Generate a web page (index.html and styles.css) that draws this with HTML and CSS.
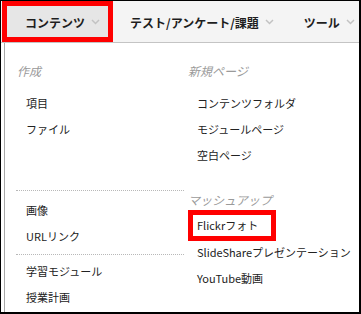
FILE: index.html
```html
<!DOCTYPE html>
<html lang="ja">
<head>
    <meta charset="UTF-8">
    <title>コンテンツメニュー</title>
    <link rel="stylesheet" href="styles.css">
</head>
<body>
    <div class="frame">
        <nav class="menubar">
            <div class="tab active">
                <span>コンテンツ</span>
                <svg class="chev" width="9" height="6" viewBox="0 0 9 6"><polyline points="1,1 4.5,4.5 8,1"/></svg>
            </div>
            <div class="tab">
                <span>テスト/アンケート/課題</span>
                <svg class="chev" width="9" height="6" viewBox="0 0 9 6"><polyline points="1,1 4.5,4.5 8,1"/></svg>
            </div>
            <div class="tab">
                <span>ツール</span>
                <svg class="chev" width="9" height="6" viewBox="0 0 9 6"><polyline points="1,1 4.5,4.5 8,1"/></svg>
            </div>
        </nav>

        <div class="dropdown">
            <div class="col-head">作成</div>
            <div class="col-head">新規ページ</div>

            <ul class="items">
                <li><a href="#">項目</a></li>
                <li><a href="#">ファイル</a></li>
            </ul>
            <ul class="items">
                <li><a href="#">コンテンツフォルダ</a></li>
                <li><a href="#">モジュールページ</a></li>
                <li><a href="#">空白ページ</a></li>
            </ul>

            <div class="col">
                <hr class="sep">
                <ul class="items group">
                    <li><a href="#">画像</a></li>
                    <li><a href="#">URLリンク</a></li>
                </ul>
                <hr class="sep sep-2">
                <ul class="items group-2">
                    <li><a href="#">学習モジュール</a></li>
                    <li><a href="#">授業計画</a></li>
                </ul>
            </div>
            <div class="col">
                <div class="col-head mashup">マッシュアップ</div>
                <ul class="items mashup-list">
                    <li class="marked"><a href="#">Flickrフォト</a></li>
                    <li><a href="#">SlideShareプレゼンテーション</a></li>
                    <li><a href="#">YouTube動画</a></li>
                </ul>
            </div>
        </div>
    </div>
</body>
</html>
```

FILE: styles.css
```css
body {
    margin: 0;
    font-family: "Noto Sans CJK JP", "Noto Sans", sans-serif;
    background-color: #ffffff;
    color: #222;
}

.frame {
    width: 361px;
    height: 314px;
    box-sizing: border-box;
    border: 1px solid #000;
    border-right-width: 2px;
    border-bottom-width: 2px;
    overflow: hidden;
    background-color: #ffffff;
}

/* Menu bar */
.menubar {
    display: flex;
    height: 42px;
    box-sizing: border-box;
    background-color: #f4f4f4;
    border-bottom: 1px solid #c4c4c4;
}

.tab {
    display: flex;
    align-items: center;
    gap: 6px;
    padding: 1px 13px 0 17px;
    font-size: 12px;
    font-weight: bold;
    color: #1e1e1e;
    white-space: nowrap;
}

.tab.active {
    margin-left: 1px;
    padding-left: 23px;
    background-color: #e6e6e6;
    box-shadow: inset 0 0 0 5px #ff0000;
}

.chev polyline {
    fill: none;
    stroke: #c2c2c2;
    stroke-width: 1.5;
}

/* Dropdown */
.dropdown {
    display: grid;
    grid-template-columns: 171px 1fr;
    margin-left: 3px;
    height: 270px;
    padding-top: 18px;
    box-sizing: border-box;
    border-left: 1px solid #a8a8a8;
    background-color: #ffffff;
}

.col-head {
    padding-left: 12px;
    font-size: 12px;
    line-height: 20px;
    font-style: italic;
    color: #9a9a9a;
    white-space: nowrap;
}

ul {
    list-style: none;
    margin: 0;
    padding: 0;
}

.items {
    margin-top: 6px;
    padding-left: 21px;
}

.items li {
    display: flex;
    font-size: 11px;
    line-height: 26px;
    white-space: nowrap;
}

.items a {
    color: #222;
    text-decoration: none;
}

.sep {
    margin: 18px -8px 0 11px;
    border: none;
    border-top: 1px dotted #b8b8b8;
    height: 0;
}

.sep-2 {
    margin-top: 5px;
}

.group {
    margin-top: 6px;
}

.group-2 {
    margin-top: 3px;
}

.mashup {
    margin-top: 18px;
}

.mashup-list {
    margin-top: 0;
}

.marked {
    margin-bottom: -2px;
}

.marked a {
    display: block;
    margin-left: -9px;
    padding: 0 13px 0 4px;
    border: 5px solid #ff0000;
    line-height: 21px;
}
```
